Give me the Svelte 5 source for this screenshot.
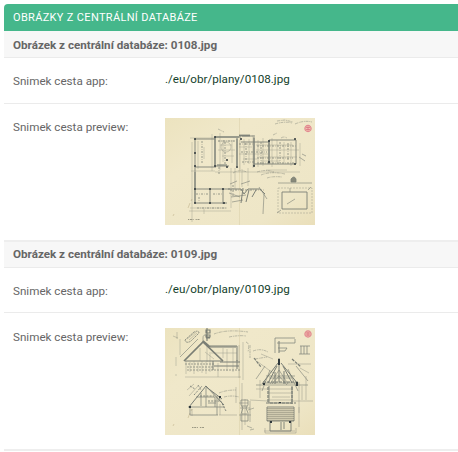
<script>
  const records = ['0108.jpg', '0109.jpg'];
  const dots = [[30,21],[30,35],[30,48],[50,48],[50,19],[62,42],[62,49],[76,21],[30,71],[45,71],[58,71],[30,85],[45,85],[59,85],[72,49],[89,48],[130,21],[130,46],[104,23],[104,44]];
</script>

<section class="panel">
  <h1>OBRÁZKY Z CENTRÁLNÍ DATABÁZE</h1>
  {#each records as file, i}
    <div class="record" class:later={i > 0}>
      <h2>Obrázek z centrální databáze: {file}</h2>
      <div class="row path">
        <span class="label">Snimek cesta app:</span>
        <span class="value">./eu/obr/plany/{file}</span>
      </div>
      <div class="row preview">
        <span class="label">Snimek cesta preview:</span>
        <svg viewBox="0 0 150 107" width="150" height="107" role="img" aria-label={file}>
          <defs>
            <linearGradient id="paper{i}" x1="0" y1="0" x2="1" y2="1">
              <stop offset="0" stop-color="#ece3bf" />
              <stop offset=".3" stop-color="#f0e8ca" />
              <stop offset=".8" stop-color="#eee6c7" />
              <stop offset="1" stop-color="#eadfba" />
            </linearGradient>
            <pattern id="planks{i}" width="2" height="2" patternUnits="userSpaceOnUse">
              <path d="M0 .5H2" stroke="#57594f" stroke-width=".6" />
            </pattern>
          </defs>
          <rect width="150" height="107" fill="url(#paper{i})" />
          <path d="M74.500 0V107" stroke="#ded4b0" stroke-width=".7" />
          <path d="M23 90l2-5M26 83l1-2M8 98l1-2" stroke="#c8bc96" stroke-width=".7" />
          {#if i === 0}
            <g fill="none" stroke="#565e5c" opacity=".74">
              <path stroke-width=".9" d="M30 21H50M30 21V85H62M30 49H51M29 71H65M30 85V71M45 71V86M58 71V86M50 19H76M50 19V48H64M72 21V48M77 18H90M89 19V48M104 22H131V46H89M104 22V46M76 24H104" />
              <path stroke-width="2" opacity=".55" d="M50 20V47M50 19H74M52 47H62M72 20V48M89 20V48M104 23V46M30 54V71" />
              <path stroke-width="1.8" d="M74 17.5H85" />
              <path stroke-width=".5" opacity=".6" d="M27 24V104M33 23V51M39 29V41M47 16V53M25 20H50M26 53H50M25 90H62M24 93H66M39 91V96M55 15V52M53 23H69M55 27H67M53 32H70M57 38H69M58 22V44M67 22V45M75 22V52M79 21V47M84 21V46M88 17V50M93 22V49M98 20V48M107 20V49M112 22V45M119 24V45M126 24V48M135 25V48M74 29H87M74 36H103M78 41H92M91 27H128M91 32H134M94 39H132M96 43H115M50 54H135M66 50V90M70 50V71M77 51V69M83 50V68M101 52H122" />
              <path stroke-width="1" stroke-dasharray="2 1 .6 1.4" opacity=".75" d="M53 23H70M74 26H89M76 34H102M77 44H90M92 28H131M92 40H128M92 45H130M54 49V57M65 72H99M68 67V78M31 76H44M34 79V84M48 76H57M32 90H61M37 23V46M60 24V46M81 25V44M96 24V46M115 24V45M123 25V43" />
              <path stroke-width="1" d="M63 71H76L79 76 83 71H95L100 76M78 70L76 85M84 72L81 84M91 72L87 79" />
              <path stroke-width=".6" d="M99 76L98 96M64 75L75 79M66 79L81 77M67 84L78 82M65 66L72 63M76 66L85 63M94 69L102 81M134 39L140 43M137 36L141 38" />
              <circle cx="61" cy="29" r="5" stroke-width=".6" opacity=".6" />
              <path stroke-width=".7" opacity=".65" stroke-dasharray="3 .8 1 .6" d="M112 3l8-1 8 2M110 6q10-3 17-1M130 6q9-4 17-2M92 54q9-3 17 0M96 57q10-4 24-1M102 60q6-2 15-1M68 55q6-4 14-1M53 11l6 3M108 17l4-2M116 20q3-2 6 0" />
              <path stroke-width=".9" d="M117 74H142V91H117Z" />
              <path stroke-width=".5" opacity=".7" stroke-dasharray="2 1" d="M113 70H147V95H113Z" />
              <path stroke-width=".6" d="M113 65H147M122 86l8-5M125 74V70M143 72L146 69M116 92L112 95" />
              <path fill="#65695f" stroke-width=".8" d="M126 64V61Q129 57 131 61V64Z" />
            </g>
            {#each dots as dot}
              <circle cx={dot[0]} cy={dot[1]} r="1" fill="#30383b" />
            {/each}
            <path d="M23 101.500H35" opacity=".7" stroke="#777766" stroke-width="1" stroke-dasharray="1.2 .7 2 .7 1 2" />
          {:else}
            <g fill="none" stroke="#565e5c" opacity=".76">
              <path stroke-width="1.7" d="M19 33L38 14 58 33M38 13L45 19" />
              <path stroke-width="1" d="M20 33H58M45 18H72V33M45 19H71M55 34H75M49 38H74M48 33V42M72 32V41" />
              <path stroke-width="1" opacity=".7" stroke-dasharray="2 1" d="M20 36H49M22 39H48M22 42H75" />
              <path stroke-width=".5" opacity=".65" d="M21 33V46M25 34V44M29 33V46M33 34V44M37 33V45M41 34V46M45 24V44M53 35V49M62 21V43M68 20V44M74 17V50M78 14V52M20 49H76M40 24L49 31M35 20V33M42 18V34M58 20V30M46 25H72M11 29V38M11 46V48M15 11V27" />
              <path stroke-width=".8" stroke-dasharray="2 .7" d="M20 12l9-8q5-2 5 1l-8 8q-5 3-6-1Z" />
              <path stroke-width=".6" d="M15 29L33 11M38 10Q38 6 42 7M38 10V14" />
              <path stroke-width="1.1" d="M42 0V13M41 2h4v3h-4zM41 7h4v2h-4zM41 10h4" />
              <path stroke-width=".6" opacity=".6" d="M8 8l5 2M12 4V11M22 11l9-7M24 12l8-7" />
              <path stroke-width=".7" opacity=".65" stroke-dasharray="3 .8 1 .6" d="M49 6q13-5 34-2M64 9q10-2 17-1M54 65q7-3 17-3M59 69q8-2 15 0M88 23q8-3 15 1M90 31l12-2M81 14q4 1 2 10M85 17V30" />
              <path stroke-width="1" d="M24 79L41 58 59 77M40 58L57 71" />
              <path stroke-width=".7" d="M23 79H60M25 79V87M52 68V87M25 87H53M31 69H50V79M36 65V78M41 60V79M43 75H51" />
              <path stroke-width=".9" stroke-dasharray="2 1.2" d="M35 68H49M43 73H55M54 70L61 83M29 67l8-9M25 58l5 3M33 57l3 5" />
              <path stroke-width=".5" opacity=".75" d="M22 62l7-6M24 68l9-10M54 87H72M27 81V88M55 76V87M71 59V75M77 55V102M80 71V97" />
              <path stroke-width=".7" d="M110 10H130M110 10V25M112 15H130V11M113 20H122L120 23H114M136 18V26M139 18V26M142 18V26M134 26H145M135 18H145" />
              <path stroke-width="1" d="M114 13V25M114 30V54M113 35L97 56M116 35L133 56M112 38L103 55M118 38L127 55M110 44V56M119 43V56" />
              <path stroke-width=".6" d="M105 42L97 63M123 41L133 63M101 48H130M99 55H132M91 57H143M100 38L91 51M131 38L143 53M104 50H127M105 56L114 42 123 56M107 56l7-8 8 9" />
              <path stroke-width="1.2" stroke-dasharray="3 1" d="M98 54H133M103 59V75M127 59V76M101 75H131M89 30L96 39M127 31L136 39" />
              <path stroke-width=".9" d="M104 58V75H127V58M102 79H129V93H102ZM105 93V103H126V93M116 94V102M119 94V101" />
              <path stroke-width=".5" opacity=".75" d="M85 72L103 73M95 52V70M91 61H103M104 61H126M104 65H126M107 69H125M104 72H126M134 54V85M137 58V72M128 73H148M100 100V105H131V100M99 103H130M134 79V99M141 48V72M93 34L108 45M135 40L144 45M96 26L108 31M123 36H146" />
              <path stroke-width=".7" d="M76 72H83V77L81 80 83 85V93H76V86L78 80 76 77ZM77 78H82M77 86H82" />
              <path stroke-width=".5" d="M85 73V94M74 75H83M75 80H85M74 87H86M83 82l6-2M82 98l5 2M85 102l4-1" />
            </g>
            <rect x="102" y="80" width="27" height="13" fill="url(#planks{i})" opacity=".55" />
            <rect x="103" y="80" width="25" height="12" fill="#8c8b78" opacity=".3" />
            <path d="M98 55h2v2h-2zM131 54h2v4h-2zM113 31h2v6h-2zM114 74h2v1h-2zM105 93h2v2h-2zM124 93h2v2h-2zM24 78h2v2h-2zM54 68h2v2h-2z" fill="#30383b" />
            <path d="M27 99.500H39" opacity=".7" stroke="#777766" stroke-width="1" stroke-dasharray="1.5 .7 2 .7 1 2" />
          {/if}
          <g transform="translate(143 {i === 0 ? 10.500 : 6})">
            <circle r="3.100" fill="#efbfae" stroke="#e28a91" stroke-width="1.200" />
            <path d="M-2 -1H2M-2 1H2M0 -2V2" stroke="#dc6f80" stroke-width=".7" />
          </g>
        </svg>
      </div>
    </div>
  {/each}
</section>

<style>
  :global(body) { background: #fff; overflow: hidden; }
  .panel {
    box-sizing: border-box;
    height: 452px;
    padding: 4px 0 0 4px;
    font-family: Roboto, sans-serif;
    font-size: 11.65px;
    color: #666;
  }
  h1 {
    margin: 0;
    height: 27px;
    padding-left: 9px;
    line-height: 27px;
    font-size: 11px;
    font-weight: 400;
    letter-spacing: .33px;
    color: #fff;
    background: #45b78b;
    border-radius: 4px 0 0 0;
  }
  h2 {
    box-sizing: border-box;
    margin: 0;
    height: 27px;
    padding-left: 9px;
    line-height: 28px;
    font-size: 11.65px;
    font-weight: 700;
    background: #f7f7f7;
    border-bottom: 1px solid #ebebeb;
  }
  .record { border-bottom: 2px solid #eee; }
  .row { display: flex; box-sizing: border-box; padding-left: 9px; }
  .path { height: 46px; border-bottom: 1px solid #ebebeb; }
  .preview { height: 136px; padding-top: 14px; }
  .label { width: 152px; flex: none; line-height: 18px; }
  .path .label { padding-top: 14px; }
  .value { padding-top: 12px; line-height: 18px; color: #153f2c; }
  .later h2 { height: 26px; line-height: 25px; }
  .later .path { height: 45px; }
  .later .preview { padding-top: 15px; }
</style>
